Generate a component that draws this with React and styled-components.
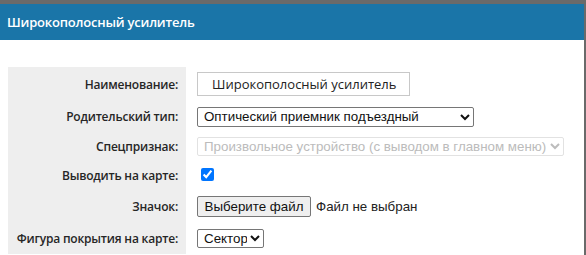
import React from 'react'
import styled, { createGlobalStyle } from 'styled-components'

const GlobalStyle = createGlobalStyle`
	html, body {
		margin: 0;
		padding: 0;
		background: #6a6a6a;
		overflow: hidden;
	}
`

const Dialog = styled.div`
	margin-top: 4px;
	width: 584px;
	height: 251px;
	background: #fff;
	overflow: hidden;
`

const Header = styled.div`
	height: 36px;
	background: #1a75a8;
	color: #fff;
	display: flex;
	align-items: center;
	padding-left: 7px;
	font-family: 'Open Sans', sans-serif;
	font-weight: 600;
	font-size: 13px;
	letter-spacing: -0.2px;
`

const Body = styled.div`
	padding: 27px 0 0 8px;
`

const Form = styled.div`
	display: grid;
	grid-template-columns: 178px 1fr;
`

const Row = styled.div`
	display: contents;

	& > * {
		height: ${p => p.$h}px;
	}
`

const Label = styled.div`
	background: #eeeeee;
	display: flex;
	align-items: center;
	justify-content: flex-end;
	padding-right: 8px;
	font-family: 'Open Sans', sans-serif;
	font-weight: 600;
	font-size: 12px;
	letter-spacing: -0.2px;
	color: #262626;
`

const Field = styled.div`
	display: flex;
	align-items: center;
	padding-left: 11px;
	font-family: 'Liberation Sans', Arial, sans-serif;
	font-size: 13.33px;
	color: #222;
`

const TextInput = styled.input`
	box-sizing: border-box;
	width: 213px;
	height: 24px;
	border: 1px solid #c8c8c8;
	padding: 0 0 0 14px;
	font-family: 'Open Sans', sans-serif;
	font-size: 13px;
	color: #222;
	outline: none;
`

const Select = styled.select`
	box-sizing: border-box;
	width: ${p => p.$w}px;
	height: ${p => p.$ht || 19}px;
	border: 1px solid ${p => (p.disabled ? '#d6d6d6' : '#767676')};
	border-radius: 2px;
	background: #fff;
	font-family: 'Liberation Sans', Arial, sans-serif;
	font-size: 13.33px;
	color: ${p => (p.disabled ? '#a0a0a0' : '#111')};
	padding: 0 0 0 2px;
`

const Check = styled.input`
	margin: -2px 0 0 4px;
	width: 13px;
	height: 13px;
	accent-color: #0075ff;
`

const FileButton = styled.button`
	box-sizing: border-box;
	width: 114px;
	height: 21px;
	border: 1px solid #767676;
	border-radius: 2px;
	background: #efefef;
	font-family: 'Liberation Sans', Arial, sans-serif;
	font-size: 13.33px;
	color: #111;
	padding: 0;
`

const FileName = styled.span`
	margin-left: 5px;
`

export default () => {
	return (
		<>
			<GlobalStyle />
			<Dialog>
				<Header>Широкополосный усилитель</Header>
				<Body>
					<Form>
						<Row $h={34}>
							<Label>Наименование:</Label>
							<Field>
								<TextInput defaultValue='Широкополосный усилитель' />
							</Field>
						</Row>
						<Row $h={31}>
							<Label>Родительский тип:</Label>
							<Field>
								<Select $w={277} $ht={20} defaultValue='1'>
									<option value='1'>Оптический приемник подъездный</option>
								</Select>
							</Field>
						</Row>
						<Row $h={29}>
							<Label>Спецпризнак:</Label>
							<Field>
								<Select $w={367} disabled defaultValue='1'>
									<option value='1'>Произвольное устройство (с выводом в главном меню)</option>
								</Select>
							</Field>
						</Row>
						<Row $h={28}>
							<Label>Выводить на карте:</Label>
							<Field>
								<Check type='checkbox' defaultChecked />
							</Field>
						</Row>
						<Row $h={34}>
							<Label>Значок:</Label>
							<Field>
								<FileButton type='button'>Выберите файл</FileButton>
								<FileName>Файл не выбран</FileName>
							</Field>
						</Row>
						<Row $h={31}>
							<Label>Фигура покрытия на карте:</Label>
							<Field>
								<Select $w={67} defaultValue='1'>
									<option value='1'>Сектор</option>
								</Select>
							</Field>
						</Row>
					</Form>
				</Body>
			</Dialog>
		</>
	)
}
